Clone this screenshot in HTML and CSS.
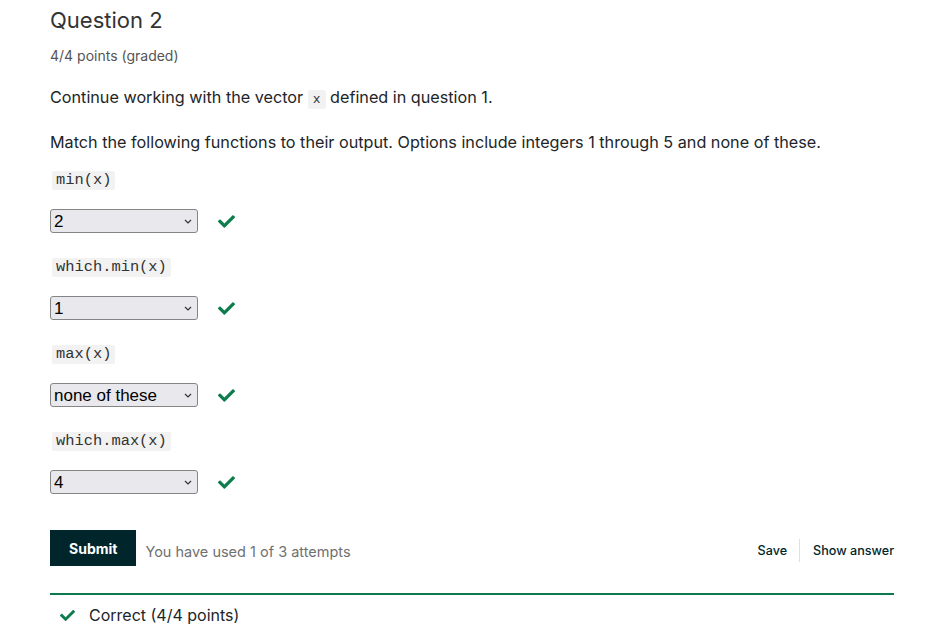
FILE: index.html
```html
<!DOCTYPE html>
<html>
<head>
<meta charset="utf-8">
<link rel="stylesheet" href="styles.css">
</head>
<body>
<div class="problem">
  <h2 class="title">Question 2</h2>
  <div class="points">4/4 points (graded)</div>
  <p class="para">Continue working with the vector <code class="inline">x</code> defined in question 1.</p>
  <p class="para">Match the following functions to their output. Options include integers 1 through 5 and none of these.</p>

  <div class="item">
    <code class="fn">min(x)</code>
    <div class="answer">
      <span class="select-wrap">
        <select class="sel"><option>2</option></select>
        <svg class="chev" viewBox="0 0 8 5"><polyline points="1,1 4,4 7,1"/></svg>
      </span>
      <svg class="check" viewBox="0 0 512 512"><path d="M173.9 439.4l-166.4-166.4c-10-10-10-26.2 0-36.2l36.2-36.2c10-10 26.2-10 36.2 0L192 312.7 432.1 72.6c10-10 26.2-10 36.2 0l36.2 36.2c10 10 10 26.2 0 36.2L210.1 439.4c-10 10-26.2 10-36.2 0z"/></svg>
    </div>
  </div>
  <div class="item">
    <code class="fn">which.min(x)</code>
    <div class="answer">
      <span class="select-wrap">
        <select class="sel"><option>1</option></select>
        <svg class="chev" viewBox="0 0 8 5"><polyline points="1,1 4,4 7,1"/></svg>
      </span>
      <svg class="check" viewBox="0 0 512 512"><path d="M173.9 439.4l-166.4-166.4c-10-10-10-26.2 0-36.2l36.2-36.2c10-10 26.2-10 36.2 0L192 312.7 432.1 72.6c10-10 26.2-10 36.2 0l36.2 36.2c10 10 10 26.2 0 36.2L210.1 439.4c-10 10-26.2 10-36.2 0z"/></svg>
    </div>
  </div>
  <div class="item">
    <code class="fn">max(x)</code>
    <div class="answer">
      <span class="select-wrap">
        <select class="sel"><option>none of these</option></select>
        <svg class="chev" viewBox="0 0 8 5"><polyline points="1,1 4,4 7,1"/></svg>
      </span>
      <svg class="check" viewBox="0 0 512 512"><path d="M173.9 439.4l-166.4-166.4c-10-10-10-26.2 0-36.2l36.2-36.2c10-10 26.2-10 36.2 0L192 312.7 432.1 72.6c10-10 26.2-10 36.2 0l36.2 36.2c10 10 10 26.2 0 36.2L210.1 439.4c-10 10-26.2 10-36.2 0z"/></svg>
    </div>
  </div>
  <div class="item">
    <code class="fn">which.max(x)</code>
    <div class="answer">
      <span class="select-wrap">
        <select class="sel"><option>4</option></select>
        <svg class="chev" viewBox="0 0 8 5"><polyline points="1,1 4,4 7,1"/></svg>
      </span>
      <svg class="check" viewBox="0 0 512 512"><path d="M173.9 439.4l-166.4-166.4c-10-10-10-26.2 0-36.2l36.2-36.2c10-10 26.2-10 36.2 0L192 312.7 432.1 72.6c10-10 26.2-10 36.2 0l36.2 36.2c10 10 10 26.2 0 36.2L210.1 439.4c-10 10-26.2 10-36.2 0z"/></svg>
    </div>
  </div>

  <div class="actions">
    <div class="left">
      <button class="submit">Submit</button>
      <span class="attempts">You have used 1 of 3 attempts</span>
    </div>
    <div class="right">
      <button class="link">Save</button>
      <span class="sep"></span>
      <button class="link">Show answer</button>
    </div>
  </div>

  <div class="notification">
    <svg class="check small" viewBox="0 0 512 512"><path d="M173.9 439.4l-166.4-166.4c-10-10-10-26.2 0-36.2l36.2-36.2c10-10 26.2-10 36.2 0L192 312.7 432.1 72.6c10-10 26.2-10 36.2 0l36.2 36.2c10 10 10 26.2 0 36.2L210.1 439.4c-10 10-26.2 10-36.2 0z"/></svg>
    <span>Correct (4/4 points)</span>
  </div>
</div>
</body>
</html>
```
FILE: styles.css
```css
* { box-sizing: border-box; }
html, body { margin: 0; padding: 0; background: #fff; }
body {
  font-family: Inter, "Noto Sans", sans-serif;
  color: #212529;
}
.problem {
  width: 844px;
  margin-left: 50px;
  padding-top: 6px;
}
.title {
  margin: 0;
  font-size: 22px;
  font-weight: 400;
  line-height: 28px;
  color: #333;
}
.points {
  margin-top: 12px;
  font-size: 14px;
  line-height: 20px;
  color: #555;
}
.para {
  margin: 19px 0 0;
  font-size: 16.2px;
  line-height: 24px;
  color: #212529;
}
.para + .para { margin-top: 18px; }
code {
  font-family: "Courier New", "Nimbus Mono PS", "Nimbus Mono L", FreeMono, "Liberation Mono", monospace;
  background: #f2f2f2;
  border-radius: 2px;
  color: #333;
}
.inline {
  font-size: 13px;
  padding: 2px 5px;
}
.item { margin-top: 14px; }
.item + .item { margin-top: 22px; }
.fn {
  display: inline-block;
  margin-left: 2px;
  font-size: 15.4px;
  line-height: 19px;
  padding: 0 4px;
}
.answer {
  display: flex;
  align-items: center;
  margin-top: 19px;
}
.select-wrap {
  position: relative;
  display: inline-flex;
}
.sel {
  -webkit-appearance: none;
  appearance: none;
  width: 148px;
  height: 24px;
  font-family: "Liberation Sans", Arial, sans-serif;
  font-size: 17px;
  color: #000;
  background: #e9e9ed;
  border: 1px solid #858585;
  border-radius: 3px;
  padding: 0 20px 0 3px;
  margin: 0;
}
.chev {
  position: absolute;
  right: 6px;
  top: 10px;
  width: 8px;
  height: 5px;
  fill: none;
  stroke: #333;
  stroke-width: 1.2;
  pointer-events: none;
}
.check {
  width: 17px;
  height: 17px;
  fill: #0d7d4d;
  margin-left: 20px;
}
.actions {
  display: flex;
  justify-content: space-between;
  align-items: center;
  margin-top: 36px;
}
.left { display: flex; align-items: center; }
.submit {
  background: #00262b;
  color: #fff;
  border: 0;
  border-radius: 0;
  height: 36px;
  padding: 0 19px;
  font-family: Inter, sans-serif;
  font-weight: 700;
  font-size: 14px;
}
.attempts {
  margin-left: 9px;
  margin-top: 6px;
  font-size: 14.5px;
  color: #707070;
}
.right {
  display: flex;
  align-items: center;
  margin-top: 4px;
}
.link {
  background: none;
  border: 0;
  padding: 0;
  font-family: Inter, sans-serif;
  font-size: 12.6px;
  font-weight: 500;
  color: #00262b;
}
.sep {
  width: 1px;
  height: 23px;
  background: #e0e0e0;
  margin: 0 13px 0 12px;
}
.notification {
  margin-top: 27px;
  border-top: 2px solid #0d7a4d;
  display: flex;
  align-items: center;
  padding: 10px 0 0 10px;
  font-size: 16px;
  color: #212529;
}
.notification .check {
  width: 15px;
  height: 15px;
  margin: 0 14px 0 0;
}
```
